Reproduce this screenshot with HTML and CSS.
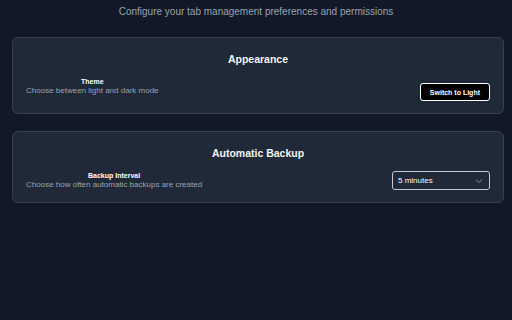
FILE: index.html
```html
<!DOCTYPE html>
<html lang="en">
<head>
<meta charset="UTF-8">
<meta name="viewport" content="width=device-width, initial-scale=1.0">
<title>Settings</title>
<link rel="stylesheet" href="styles.css">
</head>
<body>
    <p class="subtitle">Configure your tab management preferences and permissions</p>

    <div class="settings">
        <div class="card">
            <h2 class="card-title">Appearance</h2>
            <div class="row">
                <div class="info">
                    <div class="label">Theme</div>
                    <div class="desc">Choose between light and dark mode</div>
                </div>
                <button class="btn">Switch to Light</button>
            </div>
        </div>

        <div class="card">
            <h2 class="card-title">Automatic Backup</h2>
            <div class="row">
                <div class="info">
                    <div class="label">Backup Interval</div>
                    <div class="desc">Choose how often automatic backups are created</div>
                </div>
                <div class="select">
                    <span>5 minutes</span>
                    <svg width="8" height="8" viewBox="0 0 8 8"><path d="M1.5 3 L4 5.5 L6.5 3" fill="none" stroke="#9ca3af" stroke-width="0.9" stroke-linecap="round" stroke-linejoin="round"/></svg>
                </div>
            </div>
        </div>
    </div>
</body>
</html>
```

FILE: styles.css
```css
body {
    margin: 0;
    padding: 0;
    background-color: #111827;
    font-family: "Liberation Sans", Arial, sans-serif;
    color: #f9fafb;
}
.subtitle {
    margin: 0;
    padding-top: 5px;
    font-size: 10px;
    line-height: 14px;
    color: #9ca3af;
    text-align: center;
}
.settings {
    margin-top: 18px;
    padding: 0 8px 0 12px;
}
.card {
    background-color: #1f2937;
    border: 1px solid #374151;
    border-radius: 6px;
    padding: 14px 13px 12px;
    margin-bottom: 17px;
}
.card-title {
    margin: 0 0 11px;
    font-size: 10.5px;
    line-height: 14px;
    font-weight: 700;
    text-align: center;
    color: #f3f4f6;
}
.row {
    display: flex;
    justify-content: space-between;
    align-items: flex-start;
}
.info {
    text-align: center;
}
.label {
    font-size: 7px;
    line-height: 9px;
    font-weight: 700;
    color: #ffffff;
}
.desc {
    font-size: 8px;
    line-height: 10px;
    color: #9ca3af;
}
.btn {
    margin-top: 6px;
    height: 18px;
    padding: 0 9px;
    background-color: #000000;
    color: #ffffff;
    border: 1px solid #ffffff;
    border-radius: 3px;
    font-family: inherit;
    font-size: 7px;
    font-weight: 700;
}
.select {
    width: 98px;
    height: 19px;
    box-sizing: border-box;
    border: 1px solid #c4c8cf;
    border-radius: 3px;
    display: flex;
    align-items: center;
    justify-content: space-between;
    padding: 0 6px 0 5px;
    font-size: 8px;
    color: #f9fafb;
}
```
